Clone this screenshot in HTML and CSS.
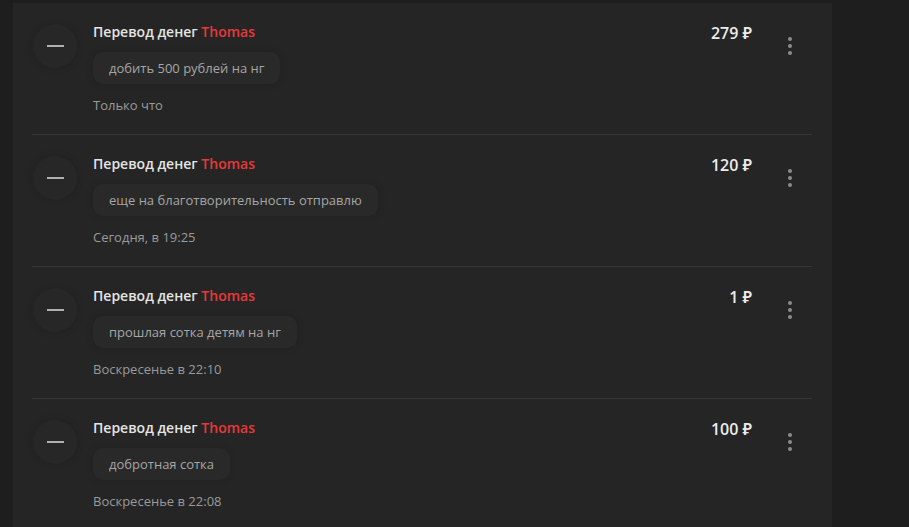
FILE: index.html
```html
<!DOCTYPE html>
<html lang="ru">

<head>
    <meta charset="UTF-8">
    <title>История операций</title>
    <meta name="viewport" content="width=device-width, initial-scale=1.0">
    <link rel="stylesheet" href="styles.css">
</head>

<body>
    <div class="feed">

        <div class="op">
            <div class="op-icon"><span class="dash"></span></div>
            <div class="op-body">
                <div class="op-title">Перевод денег <span class="who">Thomas</span></div>
                <div class="op-comment">добить 500 рублей на нг</div>
                <div class="op-time">Только что</div>
            </div>
            <div class="op-sum">279 ₽</div>
            <button class="op-more"><i></i><i></i><i></i></button>
        </div>

        <div class="op">
            <div class="op-icon"><span class="dash"></span></div>
            <div class="op-body">
                <div class="op-title">Перевод денег <span class="who">Thomas</span></div>
                <div class="op-comment">еще на благотворительность отправлю</div>
                <div class="op-time">Сегодня, в 19:25</div>
            </div>
            <div class="op-sum">120 ₽</div>
            <button class="op-more"><i></i><i></i><i></i></button>
        </div>

        <div class="op">
            <div class="op-icon"><span class="dash"></span></div>
            <div class="op-body">
                <div class="op-title">Перевод денег <span class="who">Thomas</span></div>
                <div class="op-comment">прошлая сотка детям на нг</div>
                <div class="op-time">Воскресенье в 22:10</div>
            </div>
            <div class="op-sum">1 ₽</div>
            <button class="op-more"><i></i><i></i><i></i></button>
        </div>

        <div class="op">
            <div class="op-icon"><span class="dash"></span></div>
            <div class="op-body">
                <div class="op-title">Перевод денег <span class="who">Thomas</span></div>
                <div class="op-comment">добротная сотка</div>
                <div class="op-time">Воскресенье в 22:08</div>
            </div>
            <div class="op-sum">100 ₽</div>
            <button class="op-more"><i></i><i></i><i></i></button>
        </div>

    </div>
</body>

</html>
```

FILE: styles.css
```css
body {
    margin: 0;
    font-family: 'Open Sans', 'Noto Sans', sans-serif;
    background-color: #1e1e1e;
    height: 100vh;
    overflow: hidden;
}

.feed {
    width: 819px;
    margin: 3px 0 0 13px;
    padding: 0 20px 0 19px;
    box-sizing: border-box;
    background-color: #252525;
    min-height: 100%;
}

.op {
    display: flex;
    align-items: flex-start;
    padding: 19px 0 19px;
    border-bottom: 1px solid #363636;
}

.op-icon {
    width: 44px;
    height: 44px;
    margin: 2px 16px 0 1px;
    border-radius: 50%;
    background-color: #272727;
    box-shadow: 0 0 8px rgba(0, 0, 0, 0.12);
    display: flex;
    justify-content: center;
    align-items: center;
    flex-shrink: 0;
}

.dash {
    width: 17px;
    height: 2px;
    background-color: #b0b0b0;
}

.op-body {
    flex: 1;
}

.op-title {
    font-size: 14px;
    font-weight: 600;
    line-height: 20px;
    color: #e4e4e4;
}

.who {
    color: #e53a3a;
}

.op-comment {
    display: inline-block;
    margin-top: 10px;
    padding: 0 16px;
    height: 32px;
    line-height: 32px;
    font-size: 13px;
    color: #a6a6a6;
    background-color: #292929;
    border-radius: 10px;
    box-shadow: 0 0 8px rgba(0, 0, 0, 0.1);
}

.op-time {
    margin-top: 11px;
    font-size: 13px;
    line-height: 20px;
    color: #9a9a9a;
}

.op-sum {
    font-size: 16px;
    font-weight: 600;
    line-height: 22px;
    color: #ececec;
    margin-right: 16px;
}

.op-more {
    width: 44px;
    height: 44px;
    margin-top: 2px;
    padding: 0;
    border: none;
    border-radius: 50%;
    background: transparent;
    display: flex;
    flex-direction: column;
    justify-content: center;
    align-items: center;
    gap: 3px;
    cursor: pointer;
}

.op-more i {
    width: 4px;
    height: 4px;
    border-radius: 50%;
    background-color: #8c8c8c;
}
```
